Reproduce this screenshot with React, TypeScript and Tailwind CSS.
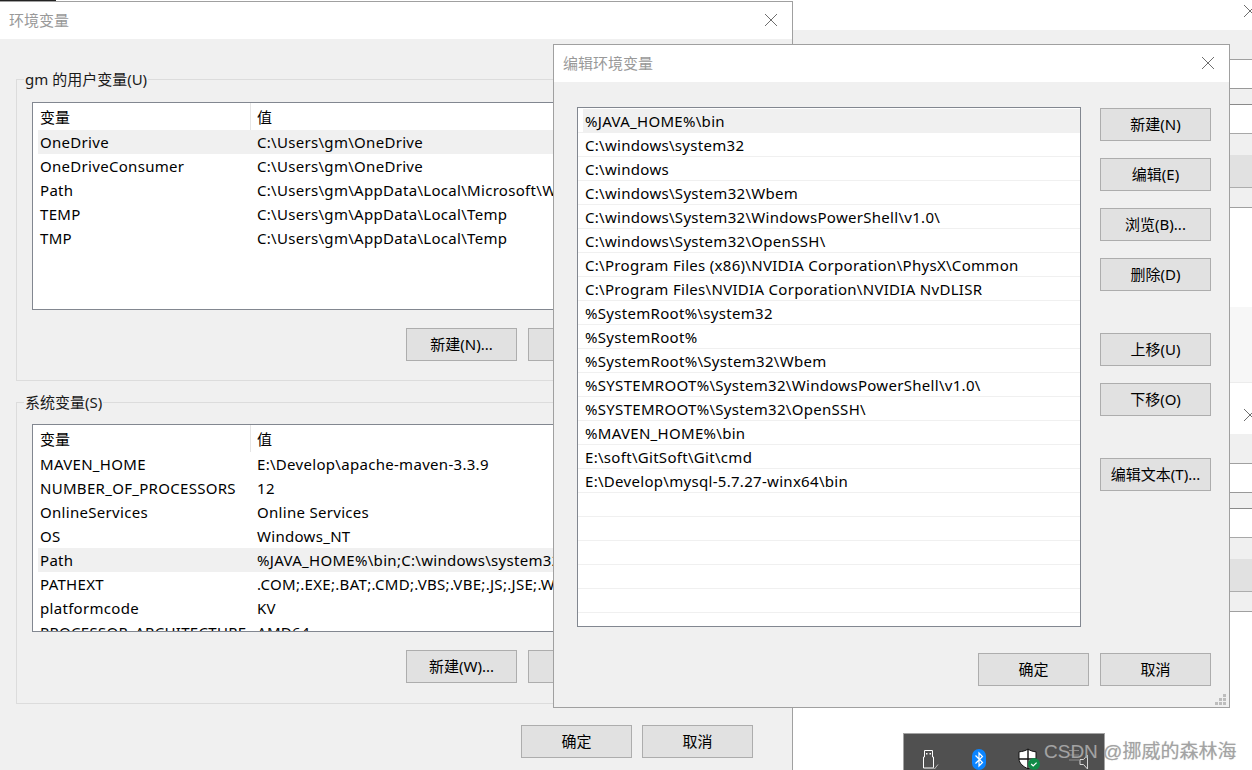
import React from 'react';

const FONT = "font-['Noto_Sans','Noto_Sans_CJK_SC',sans-serif]";

const userVars = [
  ['OneDrive', 'C:\\Users\\gm\\OneDrive'],
  ['OneDriveConsumer', 'C:\\Users\\gm\\OneDrive'],
  ['Path', 'C:\\Users\\gm\\AppData\\Local\\Microsoft\\WindowsApps;'],
  ['TEMP', 'C:\\Users\\gm\\AppData\\Local\\Temp'],
  ['TMP', 'C:\\Users\\gm\\AppData\\Local\\Temp'],
];

const sysVars = [
  ['MAVEN_HOME', 'E:\\Develop\\apache-maven-3.3.9'],
  ['NUMBER_OF_PROCESSORS', '12'],
  ['OnlineServices', 'Online Services'],
  ['OS', 'Windows_NT'],
  ['Path', '%JAVA_HOME%\\bin;C:\\windows\\system32;C:\\windows;'],
  ['PATHEXT', '.COM;.EXE;.BAT;.CMD;.VBS;.VBE;.JS;.JSE;.WSF;.WSH;.MSC'],
  ['platformcode', 'KV'],
  ['PROCESSOR_ARCHITECTURE', 'AMD64'],
];

const pathRows = [
  '%JAVA_HOME%\\bin',
  'C:\\windows\\system32',
  'C:\\windows',
  'C:\\windows\\System32\\Wbem',
  'C:\\windows\\System32\\WindowsPowerShell\\v1.0\\',
  'C:\\windows\\System32\\OpenSSH\\',
  'C:\\Program Files (x86)\\NVIDIA Corporation\\PhysX\\Common',
  'C:\\Program Files\\NVIDIA Corporation\\NVIDIA NvDLISR',
  '%SystemRoot%\\system32',
  '%SystemRoot%',
  '%SystemRoot%\\System32\\Wbem',
  '%SYSTEMROOT%\\System32\\WindowsPowerShell\\v1.0\\',
  '%SYSTEMROOT%\\System32\\OpenSSH\\',
  '%MAVEN_HOME%\\bin',
  'E:\\soft\\GitSoft\\Git\\cmd',
  'E:\\Develop\\mysql-5.7.27-winx64\\bin',
  '', '', '', '', '',
];

function CloseIcon({ className }: { className?: string }) {
  return (
    <svg width="14" height="14" viewBox="0 0 14 14" className={className}>
      <path d="M1 1L13 13M13 1L1 13" stroke="#6e6e6e" strokeWidth="1" fill="none" />
    </svg>
  );
}

function Btn({ label }: { label: string }) {
  return (
    <button className="w-[111px] h-[33px] shrink-0 bg-[#e1e1e1] border border-[#adadad] text-[15px] leading-[31px] text-black">
      {label}
    </button>
  );
}

function VarTable({ rows, active }: { rows: string[][]; active: number }) {
  return (
    <div className="w-[700px] h-[208px] border border-[#828790] bg-white overflow-hidden">
      <div className="flex h-[27px] pl-[5px]">
        <div className="w-[213px] pl-[2px] pt-px leading-[26px] border-r border-[#e5e5e5]">变量</div>
        <div className="pl-[6px] pt-px leading-[26px]">值</div>
      </div>
      {rows.map((r, i) => (
        <div
          key={r[0]}
          className={'flex h-6 ml-[5px] leading-6 whitespace-nowrap tracking-[0.3px] ' + (i === active ? 'bg-[#f0f0f0]' : '')}
        >
          <div className="w-[213px] pl-[2px] overflow-hidden shrink-0">{r[0]}</div>
          <div className="pl-[6px]">{r[1]}</div>
        </div>
      ))}
    </div>
  );
}

function Group({ title, top, children }: { title: string; top: string; children: React.ReactNode }) {
  return (
    <div className={'relative w-[761px] h-[302px] ml-4 border border-[#dcdcdc] pl-[15px] ' + top}>
      <div className="absolute left-[7px] -top-[11px] bg-[#f0f0f0] px-px leading-[20px] text-[#1a1a1a]">{title}</div>
      {children}
    </div>
  );
}

function Band({ h, line, bg }: { h: string; line?: string; bg?: string }) {
  return <div className={h + ' ' + (bg || 'bg-[#f0f0f0]') + ' ' + (line || '')} />;
}

// 右侧被挡住的两个窗口，只露出一条
function BackWindow({ titleH }: { titleH: string }) {
  return (
    <>
      <div className={'relative bg-white ' + titleH}>
        <CloseIcon className="absolute left-[450px] bottom-[12px]" />
      </div>
      <Band h="h-[30px]" line="border-b border-[#a0a0a0]" />
      <Band h="h-[29px]" line="border-b border-[#999999]" bg="bg-white" />
      <Band h="h-4 " line="border-b border-[#8a8a8a]" />
      <Band h="h-[29px]" line="border-b border-[#a8a8a8]" bg="bg-white" />
      <Band h="h-[21px]" />
      <Band h="h-[33px]" line="border-b border-[#adadad]" bg="bg-[#e1e1e1]" />
      <Band h="h-5 " line="border-b border-[#a0a0a0]" />
    </>
  );
}

function Taskbar() {
  return (
    <div className="absolute left-[903px] bottom-0 w-[202px] h-[37px] bg-[#505050] border-t border-x border-[#a3a3a3]">
      <svg width="200" height="36" viewBox="904 734 200 36" className="block">
        {/* usb */}
        <path d="M924.5 750.5h8v6.5h1v11h-10v-11h1z" fill="none" stroke="#fff" strokeWidth="1" />
        <path d="M926 753h1.5v1.5H926zM929.5 753h1.5v1.5h-1.5z" fill="#fff" />
        <path d="M932.5 767l2 2 3.5-4.5" fill="none" stroke="#b8b8b8" strokeWidth="1" />
        {/* bluetooth */}
        <rect x="972" y="749" width="14" height="21" rx="7" fill="#0a84ff" />
        <path d="M975.5 755.5l7 7-3.5 3.5v-13l3.5 3.5-7 7" fill="none" stroke="#fff" strokeWidth="1.2" />
        {/* shield */}
        <path d="M1028 749c2.5 1.8 5 2.6 8 2.8v7c0 4.5-3.4 8-8 10-4.6-2-9-5.5-9-10v-7c3.6-.2 6.4-1 9-2.8z" fill="#fff" stroke="#111" strokeWidth="1" />
        <path d="M1028 749v20M1019 759h17" stroke="#111" strokeWidth="1.4" />
        <circle cx="1034" cy="764" r="6" fill="#0f8a47" />
        <path d="M1031.2 764l2 2 3.4-3.4" fill="none" stroke="#fff" strokeWidth="1.2" />
        {/* network / speaker */}
        <path d="M1069 750.5h10M1069 755h10M1069 760h10" stroke="#8d8d8d" strokeWidth="1" />
        <path d="M1080 759.5h3.5l4-4.5v14l-4-4.5H1080z" fill="none" stroke="#d8d8d8" strokeWidth="1" />
      </svg>
    </div>
  );
}

export default function App() {
  return (
    <div className={'relative w-[1252px] h-[770px] overflow-hidden bg-white text-[15px] text-black flex ' + FONT}>
      {/* 环境变量 */}
      <div className="relative w-[793px] h-[770px] shrink-0 flex flex-col">
        <div className="h-px shrink-0 flex">
          <div className="w-[56px] bg-[#222222]" />
        </div>
        <div className="flex-1 flex flex-col border-t border-r border-[#a0a0a0] bg-[#f0f0f0]">
          <div className="relative h-[37px] shrink-0 bg-white pl-[9px] leading-[37px] text-[#999999]">
            环境变量
            <CloseIcon className="absolute left-[764px] top-[11px]" />
          </div>
          <Group title="gm 的用户变量(U)" top="mt-10 pt-[22px]">
            <VarTable rows={userVars} active={0} />
            <div className="flex gap-[11px] mt-[18px] ml-[374px]">
              <Btn label="新建(N)..." />
              <Btn label="编辑(E)..." />
            </div>
          </Group>
          <Group title="系统变量(S)" top="mt-[21px] pt-[21px]">
            <VarTable rows={sysVars} active={4} />
            <div className="flex gap-[11px] mt-[18px] ml-[374px]">
              <Btn label="新建(W)..." />
              <Btn label="编辑(I)..." />
            </div>
          </Group>
          <div className="flex justify-end gap-[10px] mt-[21px] pr-[39px]">
            <Btn label="确定" />
            <Btn label="取消" />
          </div>
        </div>
      </div>

      {/* 后面的窗口 */}
      <div className="flex-1 flex flex-col">
        <BackWindow titleH="h-[30px]" />
        <Band h="h-[99px]" bg="bg-white" />
        <Band h="h-[76px]" line="border-b border-[#ececec]" bg="bg-[#f7f7f7]" />
        <BackWindow titleH="h-[51px]" />
      </div>

      {/* 编辑环境变量 */}
      <div className="absolute left-[553px] top-[44px] w-[677px] h-[664px] flex flex-col border border-[#a0a0a0] bg-[#f0f0f0]">
        <div className="relative h-[37px] shrink-0 bg-white pl-[9px] leading-[37px] text-[#999999]">
          编辑环境变量
          <CloseIcon className="absolute left-[647px] top-[11px]" />
        </div>
        <div className="flex pl-[23px] pt-[25px] gap-[19px]">
          <div className="w-[504px] h-[520px] border border-[#828790] bg-white pt-px overflow-hidden shrink-0 tracking-[0.3px]">
            {pathRows.map((p, i) => (
              <div key={i} className="h-6 border-b border-[#f0f0f0]">
                <div className={'ml-[5px] pl-[2px] h-[23px] leading-[24px] whitespace-nowrap ' + (i === 0 ? 'bg-[#f0f0f0]' : '')}>{p}</div>
              </div>
            ))}
          </div>
          <div className="flex flex-col gap-[17px] pt-px">
            <Btn label="新建(N)" />
            <Btn label="编辑(E)" />
            <Btn label="浏览(B)..." />
            <Btn label="删除(D)" />
            <div className="mt-[25px]"><Btn label="上移(U)" /></div>
            <Btn label="下移(O)" />
            <div className="mt-[25px]"><Btn label="编辑文本(T)..." /></div>
          </div>
        </div>
        <div className="flex justify-end gap-[11px] mt-[26px] pr-[18px]">
          <Btn label="确定" />
          <Btn label="取消" />
        </div>
        <svg width="12" height="12" viewBox="0 0 12 12" className="absolute right-[2px] bottom-px">
          <path d="M8 0h3v3H8zM4 4h3v3H4zM8 4h3v3H8zM0 8h3v3H0zM4 8h3v3H4zM8 8h3v3H8z" fill="#bdbdbd" />
        </svg>
      </div>

      <Taskbar />
      <div className="absolute left-[1044px] top-[738px] text-[19px] leading-[28px] text-[#a3a3a3] whitespace-nowrap font-['Liberation_Sans','Noto_Sans_CJK_SC',sans-serif] [text-shadow:0_0_1px_rgba(120,120,120,0.4)]">
        CSDN @挪威的森林海
      </div>
    </div>
  );
}
